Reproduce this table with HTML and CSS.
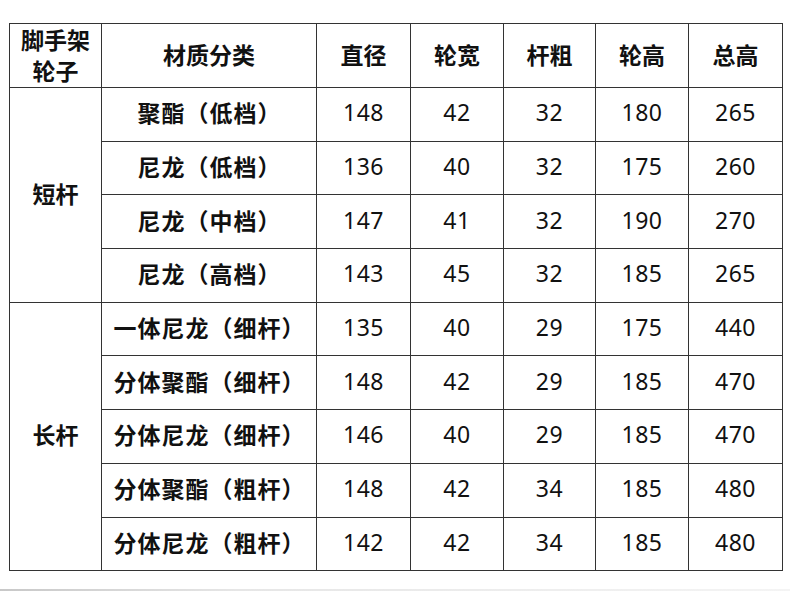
FILE: index.html
```html
<!DOCTYPE html>
<html lang="zh">
<head>
<meta charset="utf-8">
<link rel="stylesheet" href="styles.css">
</head>
<body>
<div class="page">
<table class="spec">
  <colgroup>
    <col class="c-group"><col class="c-mat"><col class="c-n1"><col class="c-n2"><col class="c-n3"><col class="c-n4"><col class="c-n5">
  </colgroup>
  <thead>
    <tr class="head">
      <th class="group-head">脚手架<br>轮子</th>
      <th>材质分类</th>
      <th>直径</th>
      <th>轮宽</th>
      <th>杆粗</th>
      <th>轮高</th>
      <th>总高</th>
    </tr>
  </thead>
  <tbody>
    <tr><th class="group" rowspan="4">短杆</th><th class="mat">聚酯（低档）</th><td>148</td><td>42</td><td>32</td><td>180</td><td>265</td></tr>
    <tr><th class="mat">尼龙（低档）</th><td>136</td><td>40</td><td>32</td><td>175</td><td>260</td></tr>
    <tr><th class="mat">尼龙（中档）</th><td>147</td><td>41</td><td>32</td><td>190</td><td>270</td></tr>
    <tr><th class="mat">尼龙（高档）</th><td>143</td><td>45</td><td>32</td><td>185</td><td>265</td></tr>
    <tr><th class="group" rowspan="5">长杆</th><th class="mat">一体尼龙（细杆）</th><td>135</td><td>40</td><td>29</td><td>175</td><td>440</td></tr>
    <tr><th class="mat">分体聚酯（细杆）</th><td>148</td><td>42</td><td>29</td><td>185</td><td>470</td></tr>
    <tr><th class="mat">分体尼龙（细杆）</th><td>146</td><td>40</td><td>29</td><td>185</td><td>470</td></tr>
    <tr><th class="mat">分体聚酯（粗杆）</th><td>148</td><td>42</td><td>34</td><td>185</td><td>480</td></tr>
    <tr><th class="mat">分体尼龙（粗杆）</th><td>142</td><td>42</td><td>34</td><td>185</td><td>480</td></tr>
  </tbody>
</table>
</div>
<div class="bottom-bar"></div>
</body>
</html>
```

FILE: styles.css
```css
html, body {
  margin: 0;
  padding: 0;
  background: #fff;
}
body {
  width: 790px;
  height: 591px;
  overflow: hidden;
  position: relative;
  font-family: "Noto Sans", "Noto Sans CJK SC", sans-serif;
  color: #111;
}
.page {
  padding: 23px 0 0 9px;
}
.spec {
  border-collapse: collapse;
  table-layout: fixed;
  width: 773px;
}
.c-group { width: 92px; }
.c-mat { width: 215px; }
.c-n1 { width: 94px; }
.c-n2 { width: 93px; }
.c-n3 { width: 92px; }
.c-n4 { width: 93px; }
.c-n5 { width: 94px; }

.spec th, .spec td {
  border: 1px solid #333;
  padding: 0 0 4px 0;
  text-align: center;
  vertical-align: middle;
  font-size: 23px;
  line-height: 30px;
}
.spec th {
  font-family: "Noto Sans CJK SC", sans-serif;
  font-weight: 700;
}
.spec th.mat {
  letter-spacing: 1px;
  padding-left: 1px;
}
.spec td {
  font-family: "Noto Sans", "Open Sans", sans-serif;
  font-weight: 400;
  letter-spacing: 0.5px;
}
.spec tr.head {
  height: 64px;
}
.spec th.group-head {
  line-height: 31px;
  padding: 0 0 1px 0;
}
.spec tbody tr {
  height: 53.7px;
}
.bottom-bar {
  position: absolute;
  left: 0;
  right: 0;
  bottom: 0;
  height: 2px;
  background: linear-gradient(to right, #c8c8c8, #e6e6e6 30%, #f4f4f4);
}
```
